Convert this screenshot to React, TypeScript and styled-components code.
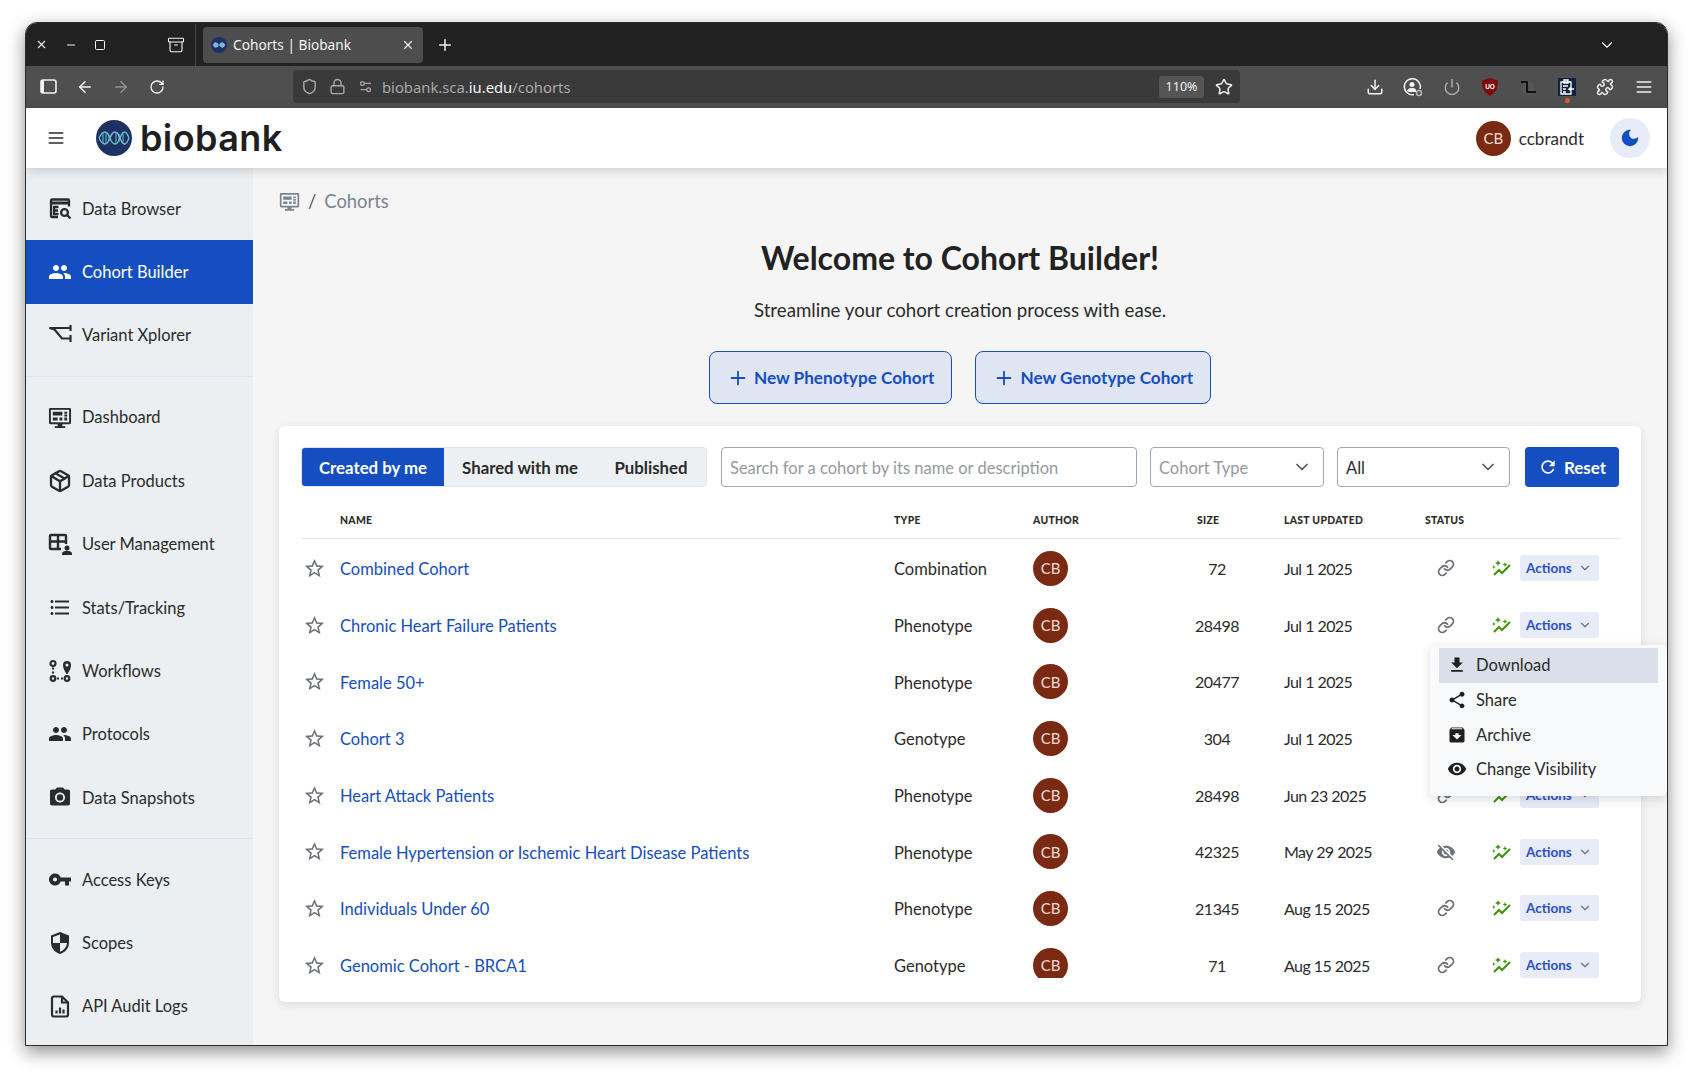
import React from "react";
import styled, { createGlobalStyle } from "styled-components";
import {
  LuArrowLeft, LuArrowRight, LuArchive, LuChevronDown, LuDownload, LuLink, LuLock, LuMenu, LuMinus, LuPackage,
  LuPlus, LuPower, LuPuzzle, LuRotateCw, LuSettings2, LuShield, LuSquare, LuStar, LuX,
} from "react-icons/lu";
import {
  MdArchive, MdDarkMode, MdFileDownload, MdFormatListBulleted, MdPeople, MdPhotoCamera, MdRefresh, MdShare,
  MdStarBorder, MdVisibility, MdVisibilityOff, MdVpnKey,
} from "react-icons/md";

const font = `"Lato", "Noto Sans", sans-serif`;

const GlobalStyle = createGlobalStyle`
  html, body { margin: 0; padding: 0; background: #fff; }
  body { font-family: ${font}; font-size: 16.5px; color: #2b2b2b; }
  * { box-sizing: border-box; }
`;

const Desktop = styled.div`
  width: 1693px;
  height: 1074px;
  padding: 22px 25px 28px 25px;
  overflow: hidden;
`;
const Window = styled.div`
  position: relative;
  width: 1643px;
  height: 1024px;
  display: flex;
  flex-direction: column;
  border: 1px solid #2b2b2b;
  border-radius: 12px 12px 0 0;
  box-shadow: 0 6px 18px rgba(0, 0, 0, 0.45);
  overflow: hidden;
  background: #f5f5f5;
`;

/* browser chrome */
const TabStrip = styled.div`
  height: 42.5px;
  padding-top: 1px;
  background: #222222;
  display: flex;
  align-items: center;
  color: #f2f2f2;
  flex: none;
`;
const WinControl = styled.span`
  width: 29px;
  display: flex;
  justify-content: center;
  &:first-child { margin-left: 1px; }
`;
const GroupIcon = styled.span`
  margin-left: 50px;
  width: 24px;
  display: flex;
  justify-content: center;
`;
const TabDivider = styled.span`
  width: 1px;
  height: 42px;
  background: #444;
  margin-left: 7px;
`;
const Tab = styled.div`
  margin-left: 7px;
  width: 220px;
  height: 36px;
  background: #4d4d4d;
  border-radius: 4px;
  display: flex;
  align-items: center;
  padding: 0 8px;
  gap: 6px;
  font: 13.7px "Noto Sans", sans-serif;
`;
const TabTitle = styled.span`
  flex: 1;
`;
const NewTab = styled.span`
  margin-left: 13px;
  display: flex;
`;
const TabOverflow = styled.span`
  margin-left: auto;
  margin-right: 51px;
  display: flex;
`;
const Toolbar = styled.div`
  height: 42.5px;
  background: #4f4f4f;
  display: flex;
  align-items: center;
  padding: 0 4px 0 5px;
  color: #f2f2f2;
  flex: none;
`;
const ToolButton = styled.span<{ $dim?: boolean }>`
  width: 36px;
  display: flex;
  justify-content: center;
  align-items: center;
  opacity: ${(p) => (p.$dim ? 0.4 : 1)};
`;
const UrlBar = styled.div`
  margin-left: 118px;
  width: 947px;
  height: 33px;
  background: #3a3a3a;
  border-radius: 4px;
  display: flex;
  align-items: center;
  padding: 0 7px 0 2px;
  font: 14.8px "Noto Sans", sans-serif;
  color: #a8a8a8;
`;
const UrlIcon = styled.span`
  width: 28px;
  display: flex;
  justify-content: center;
`;
const UrlText = styled.span`
  margin-left: 3px;
  flex: 1;
  b { font-weight: 400; color: #f4f4f4; }
`;
const Zoom = styled.span`
  width: 45px;
  height: 22px;
  border-radius: 3px;
  background: #555;
  color: #f0f0f0;
  font-size: 12.5px;
  display: flex;
  align-items: center;
  justify-content: center;
`;
const UrlStar = styled.span`
  margin-left: 11px;
  display: flex;
`;
const ToolGroup = styled.div`
  margin-left: auto;
  display: flex;
`;
const ExtButton = styled.span<{ $dim?: boolean }>`
  position: relative;
  width: 38.4px;
  display: flex;
  justify-content: center;
  align-items: center;
  opacity: ${(p) => (p.$dim ? 0.55 : 1)};
`;
const BadgeDot = styled.span`
  position: absolute;
  bottom: -6px;
  left: 17px;
  width: 5px;
  height: 5px;
  border-radius: 50%;
  background: #e5542a;
`;

/* app header */
const Header = styled.header`
  position: relative;
  z-index: 2;
  height: 60px;
  flex: none;
  background: #fff;
  box-shadow: 0 2px 10px rgba(0, 0, 0, 0.18);
  display: flex;
  align-items: center;
  padding: 0 17px 0 20px;
  color: #2b2b2b;
`;
const Burger = styled.span`
  display: flex;
  margin-right: 30px;
`;
const Wordmark = styled.span`
  margin-left: 8px;
  font: 600 36px "Inter", sans-serif;
  letter-spacing: 0.4px;
  color: #1f1f1f;
`;
const UserBox = styled.div`
  margin-left: auto;
  display: flex;
  align-items: center;
  gap: 8px;
  font-size: 17px;
`;
const Avatar = styled.span<{ $size?: number }>`
  width: ${(p) => p.$size ?? 35}px;
  height: ${(p) => p.$size ?? 35}px;
  border-radius: 50%;
  background: #7a2a12;
  color: #f4dcd2;
  display: inline-flex;
  align-items: center;
  justify-content: center;
  font-size: 15px;
`;
const MoonButton = styled.span`
  margin-left: 26px;
  width: 40px;
  height: 40px;
  border-radius: 50%;
  background: #e7ecf8;
  color: #154ec1;
  display: flex;
  align-items: center;
  justify-content: center;
`;

/* page */
const Body = styled.div`
  flex: 1;
  min-height: 0;
  display: flex;
`;
const Sidebar = styled.nav`
  width: 227px;
  flex: none;
  background: #eceff1;
  padding-top: 9px;
`;
const NavItem = styled.a<{ $active?: boolean }>`
  height: 63.4px;
  display: flex;
  align-items: center;
  gap: 10px;
  padding-left: 22px;
  background: ${(p) => (p.$active ? "#154ec1" : "transparent")};
  color: ${(p) => (p.$active ? "#fff" : "#2b2b2b")};
`;
const NavIcon = styled.span`
  width: 24px;
  height: 24px;
  display: flex;
  align-items: center;
  justify-content: center;
  flex: none;
`;
const NavDivider = styled.hr`
  margin: 9px 0 8.5px;
  border: 0;
  border-top: 1px solid #dfe5ee;
`;
const Main = styled.main`
  flex: 1;
  min-width: 0;
  padding: 18px 26px 0 26px;
`;
const Crumbs = styled.div`
  display: flex;
  align-items: center;
  gap: 8px;
  height: 30px;
  font-size: 18.4px;
  color: #7c8490;
`;
const CrumbSep = styled.span`
  color: #555;
`;
const Hero = styled.section`
  text-align: center;
`;
const Title = styled.h1`
  margin: 22px 0 0;
  font-size: 32px;
  line-height: 40px;
  font-weight: 700;
  color: #222;
`;
const Subtitle = styled.p`
  margin: 17px 0 0;
  font-size: 18.7px;
  line-height: 30px;
  color: #2b2b2b;
`;
const HeroActions = styled.div`
  margin-top: 26px;
  display: flex;
  justify-content: center;
  gap: 23px;
`;
const NewButton = styled.button`
  height: 53px;
  padding: 0 17px;
  display: flex;
  align-items: center;
  gap: 5px;
  background: #dfe5f2;
  border: 1.5px solid #154ec1;
  border-radius: 8px;
  color: #154ec1;
  font: 700 17.2px ${font};
`;
const Card = styled.section`
  position: relative;
  margin-top: 22px;
  height: 576px;
  background: #fff;
  border-radius: 6px;
  box-shadow: 0 3px 10px rgba(0, 0, 0, 0.1);
  padding: 21px 21px 23px 22px;
`;
const Filters = styled.div`
  display: flex;
  height: 40px;
`;
const TabGroup = styled.div`
  width: 406px;
  flex: none;
  display: flex;
  background: #ecf0f2;
  border: 1px solid #e1e6ee;
  border-radius: 4px;
  overflow: hidden;
`;
const FilterTab = styled.span<{ $active?: boolean; $w: number }>`
  width: ${(p) => p.$w}px;
  display: flex;
  align-items: center;
  justify-content: center;
  font-weight: 700;
  font-size: 16.8px;
  background: ${(p) => (p.$active ? "#154ec1" : "transparent")};
  color: ${(p) => (p.$active ? "#fff" : "#2b2b2b")};
`;
const Field = styled.div<{ $w: number; $left: number }>`
  width: ${(p) => p.$w}px;
  margin-left: ${(p) => p.$left}px;
  flex: none;
  border: 1px solid #9aa7bf;
  border-radius: 4px;
  display: flex;
  align-items: center;
  justify-content: space-between;
  padding: 0 11px 0 8px;
  background: #fff;
`;
const Placeholder = styled.span<{ $dark?: boolean }>`
  padding-top: 1px;
  color: ${(p) => (p.$dark ? "#2b2b2b" : "#96999e")};
`;
const ResetButton = styled.button`
  margin-left: 15px;
  width: 94px;
  flex: none;
  border: 0;
  border-radius: 4px;
  background: #154ec1;
  color: #fff;
  font: 700 17px ${font};
  display: flex;
  align-items: center;
  justify-content: center;
  gap: 6px;
`;
const columns = "39px 554px 139px 162px 89px 141px 194px";
const HeadRow = styled.div`
  height: 52px;
  display: grid;
  grid-template-columns: ${columns};
  align-items: end;
  padding-bottom: 10px;
  border-bottom: 1.5px solid #e0e6ee;
`;
const HeadCell = styled.span<{ $pad?: number }>`
  padding-left: ${(p) => p.$pad ?? 0}px;
  font-size: 10.4px;
  line-height: 16px;
  font-weight: 900;
  letter-spacing: 0.3px;
  color: #2b2b2b;
`;
const Rows = styled.div`
  height: 439px;
  padding-top: 1px;
  overflow: hidden;
`;
const Row = styled.div`
  height: 56.7px;
  display: grid;
  grid-template-columns: ${columns};
  align-items: center;
`;
const StarCell = styled.span`
  display: flex;
  padding-left: 2px;
  color: #6b7079;
`;
const NameLink = styled.a`
  padding-top: 2px;
  color: #154ec1;
`;
const TextCell = styled.span`
  padding-top: 2px;
`;
const NumberCell = styled.span<{ $tight?: boolean }>`
  font-size: 16px;
  letter-spacing: ${(p) => (p.$tight ? "-0.55px" : "-0.45px")};
  width: ${(p) => (p.$tight ? "auto" : "44px")};
  text-align: ${(p) => (p.$tight ? "left" : "center")};
`;
const RowActions = styled.div`
  display: flex;
  align-items: center;
`;
const StatusIcon = styled.span`
  width: 42px;
  display: flex;
  justify-content: center;
  color: #6d717a;
`;
const Trend = styled.span`
  margin-left: 25px;
  width: 20px;
  display: flex;
`;
const ActionsButton = styled.button`
  margin-left: 8px;
  width: 79px;
  height: 26px;
  border: 0;
  border-radius: 3px;
  background: #e7ecf8;
  color: #2a4fc9;
  font: 700 13.5px ${font};
  display: flex;
  align-items: center;
  justify-content: space-between;
  padding: 0 7px 0 6px;
  svg { color: #6d717a; }
`;
const Menu = styled.div`
  position: absolute;
  top: 219px;
  right: -26px;
  width: 237px;
  height: 151px;
  padding: 3px 9px;
  background: #f8f9fb;
  border-radius: 5px;
  box-shadow: 0 3px 12px rgba(0, 0, 0, 0.14);
  z-index: 3;
`;
const MenuItem = styled.div<{ $active?: boolean }>`
  height: 34.7px;
  display: flex;
  align-items: center;
  gap: 9px;
  padding-left: 8px;
  background: ${(p) => (p.$active ? "#dadfe9" : "transparent")};
  color: #2b2b2b;
  svg { color: #1f1f1f; }
`;

/* drawn icons */
const LogoMark = () => (
  <svg width="36" height="36" viewBox="0 0 36 36">
    <circle cx="18" cy="18" r="18" fill="#1d3263" />
    <g fill="none" stroke="#63c1c4" strokeWidth="1.3">
      <path d="M3 18c4-8 8-8 11 0s7 8 10 0 6-8 9 0" />
      <path d="M3 18c4 8 8 8 11 0s7-8 10 0 6 8 9 0" stroke="#7fb6df" />
      <path d="M7 13v10M10 12v12M13 15v6M20 13v10M23 14v8M27 12v12" strokeWidth="1" />
    </g>
  </svg>
);
const DataBrowserIcon = () => (
  <svg width="25" height="25" viewBox="0 0 24 24" fill="none" stroke="currentColor" strokeWidth="2.300">
    <path d="M10 20.500H4a1 1 0 0 1-1-1V4a1 1 0 0 1 1-1h16a1 1 0 0 1 1 1v6" />
    <path d="M3 6.500h18" strokeWidth="3" />
    <path d="M10.500 10.500H6v7h4.500M6 14h4" />
    <circle cx="16.500" cy="16" r="3.400" />
    <path d="M19 18.500 22.500 22" />
  </svg>
);
const VariantIcon = () => (
  <svg width="26" height="26" viewBox="0 0 24 24" fill="none" stroke="currentColor" strokeWidth="2.200">
    <path d="M1.500 5h21M22.500 2v6" />
    <path d="M1.500 5l5 1.500 7.500 9h8.500M22.500 12v7" />
  </svg>
);
const DashboardIcon = () => (
  <svg width="26" height="25" viewBox="0 0 25 24">
    <path fill="currentColor" d="M2.500 2h20A1.500 1.500 0 0 1 24 3.500v14a1.500 1.500 0 0 1-1.500 1.500H15v2h3v2H7v-2h3v-2H2.500A1.500 1.500 0 0 1 1 17.500v-14A1.500 1.500 0 0 1 2.500 2z" />
    <path fill="#eceff1" d="M3 4h19v13H3z" />
    <path fill="currentColor" d="M5 6h10v4H5zM17 6h3v2h-3zM17 9h3v2h-3zM5 12h5v3H5zM12 12h3v3h-3zM17 12h3v3h-3z" />
  </svg>
);
const UserMgmtIcon = () => (
  <svg width="26" height="26" viewBox="0 0 24 24">
    <path fill="none" stroke="currentColor" strokeWidth="2.400" d="M13 17H3a1 1 0 0 1-1-1V4a1 1 0 0 1 1-1h14a1 1 0 0 1 1 1v8M2 9.500h16M10 4v13" />
    <circle cx="19" cy="16" r="2.500" fill="currentColor" />
    <path fill="currentColor" d="M14 23v-1.500c0-1.800 2.500-2.800 5-2.800s5 1 5 2.800V23z" />
  </svg>
);
const WorkflowIcon = () => (
  <svg width="25" height="25" viewBox="0 0 24 24" fill="none" stroke="currentColor" strokeWidth="2.200">
    <circle cx="5" cy="5" r="2.500" />
    <circle cx="5" cy="20" r="2.300" />
    <circle cx="19" cy="20" r="2.300" />
    <path d="M19 16s-4-5-4-9.500a4 4 0 0 1 8 0C23 11 19 16 19 16z" fill="currentColor" stroke="none" />
    <circle cx="19" cy="6.500" r="1.500" fill="#eceff1" stroke="none" />
    <path d="M5 9v7M9 20h6" strokeDasharray="2 2" />
  </svg>
);
const ShieldHalfIcon = () => (
  <svg width="26" height="26" viewBox="0 0 24 24">
    <path fill="currentColor" d="M12 1 3 4.500v7c0 5.500 3.800 10 9 11.500 5.200-1.500 9-6 9-11.500v-7z" />
    <path fill="#eceff1" d="M12 3.500v8.500H5V6zM12 12h7c-.4 4-3.300 7.500-7 8.700z" />
  </svg>
);
const AuditIcon = () => (
  <svg width="25" height="25" viewBox="0 0 24 24" fill="none" stroke="currentColor" strokeWidth="2.200">
    <path d="M14 2H6a2 2 0 0 0-2 2v16a2 2 0 0 0 2 2h12a2 2 0 0 0 2-2V8z" />
    <path d="M14 2v6h6" />
    <path d="M8.500 19v-3M12 19v-6M15.500 19v-4" />
  </svg>
);
const CrumbIcon = () => (
  <svg width="21" height="21" viewBox="0 0 25 24">
    <path fill="#7c8490" d="M2.500 2h20A1.500 1.500 0 0 1 24 3.500v14a1.500 1.500 0 0 1-1.500 1.500H15v2h3v2H7v-2h3v-2H2.500A1.500 1.500 0 0 1 1 17.500v-14A1.500 1.500 0 0 1 2.500 2z" />
    <path fill="#f5f5f5" d="M3 4h19v13H3z" />
    <path fill="#7c8490" d="M5 6h10v4H5zM17 6h3v2h-3zM17 9h3v2h-3zM5 12h5v3H5zM12 12h3v3h-3zM17 12h3v3h-3z" />
  </svg>
);
const TrendIcon = () => (
  <svg width="20" height="16" viewBox="0 0 20 16">
    <path d="M2 15l5-5 3 3 8-8" fill="none" stroke="#3d9406" strokeWidth="2" />
    <path fill="#3d9406" d="M6 0l.9 2.100L9 3l-2.100.9L6 6l-.9-2.100L3 3l2.100-.9zM1.800 5l.6 1.400L3.800 7l-1.400.6L1.800 9l-.6-1.400L-.2 7l1.400-.6zM13 2l.7 1.800 1.800.7-1.800.7L13 7l-.7-1.800-1.800-.7 1.800-.7z" />
  </svg>
);
const AccountIcon = () => (
  <svg width="20" height="20" viewBox="0 0 20 20" fill="none" stroke="#f2f2f2" strokeWidth="1.500">
    <path d="M17 12A8 8 0 1 0 11 17.500" />
    <circle cx="9" cy="7.500" r="2.500" fill="#f2f2f2" stroke="none" />
    <path d="M4 14c1-2.500 3-3 5-3s3 .5 4 1.500V15H6z" fill="#f2f2f2" stroke="none" />
    <circle cx="16" cy="16" r="2.500" stroke="#b5b5b5" />
  </svg>
);
const UBlockIcon = () => (
  <svg width="16" height="18" viewBox="0 0 16 18">
    <path fill="#800a0a" d="M8 0l8 2.500c0 7-1.500 12-8 15.500C1.500 14.500 0 9.500 0 2.500z" />
    <text x="8" y="10.500" textAnchor="middle" fontSize="6.500" fontWeight="700" fill="#fff" fontFamily="Liberation Sans, sans-serif">UO</text>
  </svg>
);
const StepIcon = () => (
  <svg width="18" height="18" viewBox="0 0 18 18" fill="none">
    <circle cx="8" cy="10" r="7" fill="#555" />
    <path d="M1 4h6v10h9" stroke="#111" strokeWidth="2" />
  </svg>
);
const ClipIcon = () => (
  <svg width="18" height="18" viewBox="0 0 18 18">
    <path fill="#10243f" d="M0 0h18v18H0z" />
    <path fill="none" stroke="#fff" strokeWidth="1.300" d="M3 4h10v12H3zM6 2h4v3H6zM5 8h5M5 11h3M5 14h3M16 11h-5l2-2m-2 2 2 2" />
  </svg>
);

const navTop = [
  { icon: <DataBrowserIcon />, label: "Data Browser" },
  { icon: <MdPeople size={28} />, label: "Cohort Builder", active: true },
  { icon: <VariantIcon />, label: "Variant Xplorer" },
];
const navMid = [
  { icon: <DashboardIcon />, label: "Dashboard" },
  { icon: <LuPackage size={24} strokeWidth={2.300} />, label: "Data Products" },
  { icon: <UserMgmtIcon />, label: "User Management" },
  { icon: <MdFormatListBulleted size={27} />, label: "Stats/Tracking" },
  { icon: <WorkflowIcon />, label: "Workflows" },
  { icon: <MdPeople size={28} />, label: "Protocols" },
  { icon: <MdPhotoCamera size={29} />, label: "Data Snapshots" },
];
const navBottom = [
  { icon: <MdVpnKey size={29} />, label: "Access Keys" },
  { icon: <ShieldHalfIcon />, label: "Scopes" },
  { icon: <AuditIcon />, label: "API Audit Logs" },
];

// rows 3 and 4 sit fully under the open menu, so their actions are left out
const cohorts = [
  { name: "Combined Cohort", type: "Combination", size: 72, updated: "Jul 1 2025" },
  { name: "Chronic Heart Failure Patients", type: "Phenotype", size: 28498, updated: "Jul 1 2025" },
  { name: "Female 50+", type: "Phenotype", size: 20477, updated: "Jul 1 2025", covered: true },
  { name: "Cohort 3", type: "Genotype", size: 304, updated: "Jul 1 2025", covered: true },
  { name: "Heart Attack Patients", type: "Phenotype", size: 28498, updated: "Jun 23 2025" },
  { name: "Female Hypertension or Ischemic Heart Disease Patients", type: "Phenotype", size: 42325, updated: "May 29 2025", hidden: true },
  { name: "Individuals Under 60", type: "Phenotype", size: 21345, updated: "Aug 15 2025" },
  { name: "Genomic Cohort - BRCA1", type: "Genotype", size: 71, updated: "Aug 15 2025" },
];

const NavList = ({ items }: { items: { icon: React.ReactNode; label: string; active?: boolean }[] }) => (
  <>
    {items.map((item) => (
      <NavItem key={item.label} $active={item.active}>
        <NavIcon>{item.icon}</NavIcon>
        {item.label}
      </NavItem>
    ))}
  </>
);

const App = () => (
  <Desktop>
    <GlobalStyle />
    <Window>
      <TabStrip>
        <WinControl><LuX size={13} /></WinControl>
        <WinControl><LuMinus size={12} /></WinControl>
        <WinControl><LuSquare size={12} /></WinControl>
        <GroupIcon><LuArchive size={18} strokeWidth={1.500} /></GroupIcon>
        <TabDivider />
        <Tab>
          <svg width="16" height="16" viewBox="0 0 36 36">
            <circle cx="18" cy="18" r="18" fill="#1d3263" />
            <path d="M4 18c4-8 8-8 14 0s10 8 14 0c-4-8-10-8-14 0s-10 8-14 0z" fill="#7fb6df" />
          </svg>
          <TabTitle>Cohorts | Biobank</TabTitle>
          <LuX size={14} />
        </Tab>
        <NewTab><LuPlus size={18} /></NewTab>
        <TabOverflow><LuChevronDown size={18} strokeWidth={1.500} /></TabOverflow>
      </TabStrip>
      <Toolbar>
        <ToolButton>
          <svg width="18" height="16" viewBox="0 0 18 16">
            <rect x="1" y="1" width="15" height="13" rx="2" fill="none" stroke="#f2f2f2" strokeWidth="1.600" />
            <rect x="1" y="1" width="3" height="13" fill="#f2f2f2" />
          </svg>
        </ToolButton>
        <ToolButton><LuArrowLeft size={18} /></ToolButton>
        <ToolButton $dim><LuArrowRight size={18} /></ToolButton>
        <ToolButton><LuRotateCw size={16} /></ToolButton>
        <UrlBar>
          <UrlIcon><LuShield size={17} /></UrlIcon>
          <UrlIcon><LuLock size={17} /></UrlIcon>
          <UrlIcon><LuSettings2 size={15} /></UrlIcon>
          <UrlText>biobank.sca.<b>iu.edu</b>/cohorts</UrlText>
          <Zoom>110%</Zoom>
          <UrlStar><LuStar size={18} color="#f2f2f2" /></UrlStar>
        </UrlBar>
        <ToolGroup>
          <ExtButton><LuDownload size={18} /></ExtButton>
          <ExtButton><AccountIcon /></ExtButton>
          <ExtButton $dim><LuPower size={18} /></ExtButton>
          <ExtButton><UBlockIcon /></ExtButton>
          <ExtButton><StepIcon /></ExtButton>
          <ExtButton><ClipIcon /><BadgeDot /></ExtButton>
          <ExtButton><LuPuzzle size={18} /></ExtButton>
          <ExtButton><LuMenu size={20} /></ExtButton>
        </ToolGroup>
      </Toolbar>

      <Header>
        <Burger><LuMenu size={20} /></Burger>
        <LogoMark />
        <Wordmark>biobank</Wordmark>
        <UserBox>
          <Avatar>CB</Avatar>
          ccbrandt
        </UserBox>
        <MoonButton><MdDarkMode size={22} /></MoonButton>
      </Header>

      <Body>
        <Sidebar>
          <NavList items={navTop} />
          <NavDivider />
          <NavList items={navMid} />
          <NavDivider />
          <NavList items={navBottom} />
        </Sidebar>
        <Main>
          <Crumbs>
            <CrumbIcon />
            <CrumbSep>/</CrumbSep>
            Cohorts
          </Crumbs>
          <Hero>
            <Title>Welcome to Cohort Builder!</Title>
            <Subtitle>Streamline your cohort creation process with ease.</Subtitle>
            <HeroActions>
              <NewButton><LuPlus size={22} />New Phenotype Cohort</NewButton>
              <NewButton><LuPlus size={22} />New Genotype Cohort</NewButton>
            </HeroActions>
          </Hero>
          <Card>
            <Filters>
              <TabGroup>
                <FilterTab $active $w={142}>Created by me</FilterTab>
                <FilterTab $w={152}>Shared with me</FilterTab>
                <FilterTab $w={110}>Published</FilterTab>
              </TabGroup>
              <Field $w={416} $left={14}><Placeholder>Search for a cohort by its name or description</Placeholder></Field>
              <Field $w={174} $left={13}>
                <Placeholder>Cohort Type</Placeholder>
                <LuChevronDown size={20} color="#555" />
              </Field>
              <Field $w={173} $left={13}>
                <Placeholder $dark>All</Placeholder>
                <LuChevronDown size={20} color="#555" />
              </Field>
              <ResetButton><MdRefresh size={20} />Reset</ResetButton>
            </Filters>
            <HeadRow>
              <span />
              <HeadCell>NAME</HeadCell>
              <HeadCell>TYPE</HeadCell>
              <HeadCell>AUTHOR</HeadCell>
              <HeadCell $pad={2}>SIZE</HeadCell>
              <HeadCell>LAST UPDATED</HeadCell>
              <HeadCell>STATUS</HeadCell>
            </HeadRow>
            <Rows>
              {cohorts.map((c) => (
                <Row key={c.name}>
                  <StarCell><MdStarBorder size={23} /></StarCell>
                  <NameLink>{c.name}</NameLink>
                  <TextCell>{c.type}</TextCell>
                  <span><Avatar>CB</Avatar></span>
                  <NumberCell>{c.size}</NumberCell>
                  <NumberCell $tight>{c.updated}</NumberCell>
                  {!c.covered && (
                    <RowActions>
                      <StatusIcon>{c.hidden ? <MdVisibilityOff size={20} /> : <LuLink size={18} strokeWidth={2.400} />}</StatusIcon>
                      <Trend><TrendIcon /></Trend>
                      <ActionsButton>Actions<LuChevronDown size={14} /></ActionsButton>
                    </RowActions>
                  )}
                </Row>
              ))}
            </Rows>
            <Menu>
              <MenuItem $active><MdFileDownload size={20} />Download</MenuItem>
              <MenuItem><MdShare size={20} />Share</MenuItem>
              <MenuItem><MdArchive size={20} />Archive</MenuItem>
              <MenuItem><MdVisibility size={20} />Change Visibility</MenuItem>
            </Menu>
          </Card>
        </Main>
      </Body>
    </Window>
  </Desktop>
);

export default App;
